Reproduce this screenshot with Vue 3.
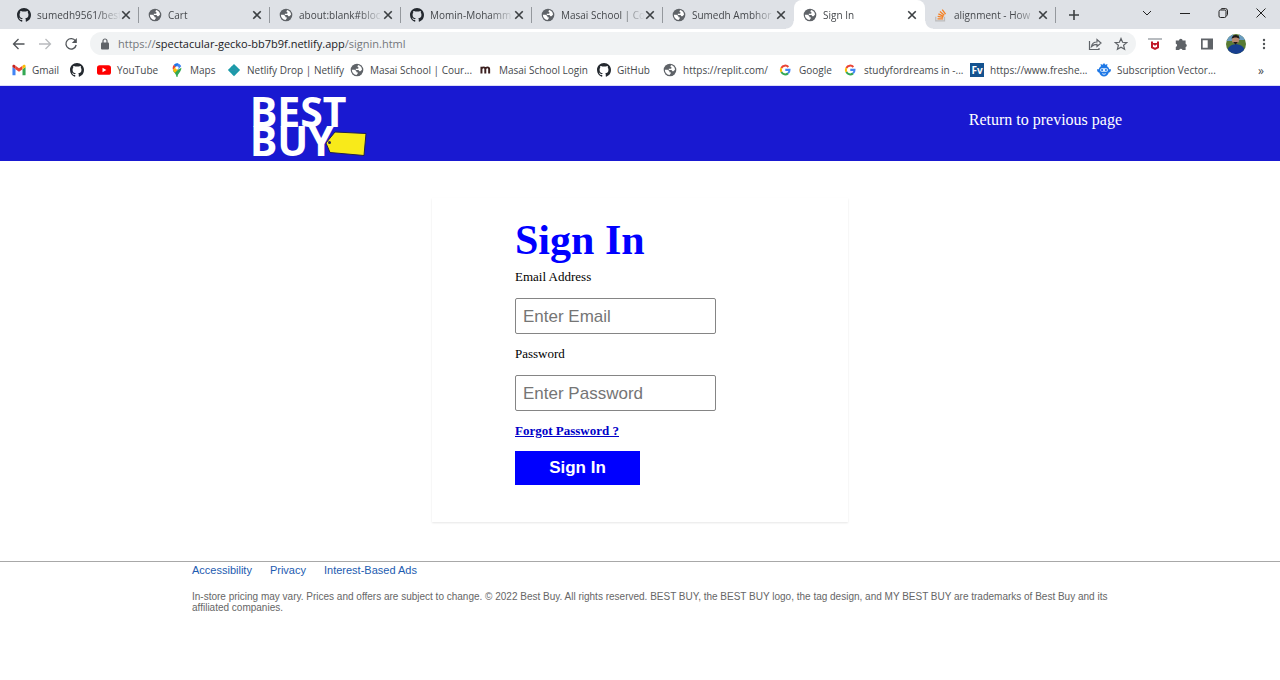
<script setup>
import { ref } from 'vue'

const tabs = [
  { icon: 'github', title: 'sumedh9561/best' },
  { icon: 'globe', title: 'Cart' },
  { icon: 'globe', title: 'about:blank#bloc' },
  { icon: 'github', title: 'Momin-Mohamm' },
  { icon: 'globe', title: 'Masai School | Co' },
  { icon: 'globe', title: 'Sumedh Ambhor' },
  { icon: 'globe', title: 'Sign In', active: true },
  { icon: 'stack', title: 'alignment - How' }
]

const bookmarks = [
  { icon: 'gmail', title: 'Gmail' },
  { icon: 'github', title: '' },
  { icon: 'youtube', title: 'YouTube' },
  { icon: 'maps', title: 'Maps' },
  { icon: 'netlify', title: 'Netlify Drop | Netlify' },
  { icon: 'globe', title: 'Masai School | Cour...' },
  { icon: 'masai', title: 'Masai School Login' },
  { icon: 'github', title: 'GitHub' },
  { icon: 'globe', title: 'https://replit.com/' },
  { icon: 'google', title: 'Google' },
  { icon: 'google', title: 'studyfordreams in -...' },
  { icon: 'fv', title: 'https://www.freshe...' },
  { icon: 'robot', title: 'Subscription Vector...' }
]

const email = ref('')
const password = ref('')
</script>

<template>
  <svg class="defs" aria-hidden="true">
    <symbol id="github" viewBox="0 0 16 16">
      <path fill="#24292f" d="M8 0C3.58 0 0 3.58 0 8c0 3.54 2.29 6.53 5.47 7.59.4.07.55-.17.55-.38 0-.19-.01-.82-.01-1.49-2.01.37-2.53-.49-2.69-.94-.09-.23-.48-.94-.82-1.13-.28-.15-.68-.52-.01-.53.63-.01 1.08.58 1.23.82.72 1.21 1.87.87 2.33.66.07-.52.28-.87.51-1.07-1.78-.2-3.64-.89-3.64-3.95 0-.87.31-1.59.82-2.15-.08-.2-.36-1.02.08-2.12 0 0 .67-.21 2.2.82a7.6 7.6 0 0 1 4 0c1.53-1.04 2.2-.82 2.2-.82.44 1.1.16 1.92.08 2.12.51.56.82 1.27.82 2.15 0 3.07-1.87 3.75-3.65 3.95.29.25.54.73.54 1.48 0 1.07-.01 1.93-.01 2.2 0 .21.15.46.55.38A8 8 0 0 0 16 8c0-4.42-3.58-8-8-8z" />
    </symbol>
    <symbol id="globe" viewBox="0 0 16 16">
      <circle cx="8" cy="8" r="7.2" fill="#5f6368" />
      <path fill="#fff" d="M9.3 2.2 8.4 4l1.4 1.2-.5 1.3H6.6v1.4h3.1l1 1.6h1.2l1.8-1.8a5.8 5.8 0 0 0-4.4-5.5zM2.2 7.7h3.1l2 1.5v1.5h1.5v1.4l-1.4 1.6A5.8 5.8 0 0 1 2.2 7.7z" />
    </symbol>
    <symbol id="stack" viewBox="0 0 16 16">
      <path fill="none" stroke="#bcbbbb" stroke-width="1.4" d="M2 10v4.6h10V10" />
      <path fill="none" stroke="#f48024" stroke-width="1.5" d="M4 12.4h6.4M4.2 9.6l6.3 1.2M5 6.8l6 2.7M6.8 4.1l5 4.1M9.4 1.8l3.8 5.2" />
    </symbol>
    <symbol id="gmail" viewBox="0 0 16 16">
      <path fill="#4285f4" d="M1 14h3V7L.5 4.5V13c0 .6.2 1 .5 1z" />
      <path fill="#34a853" d="M12 14h3c.3 0 .5-.4.5-1V4.5L12 7z" />
      <path fill="#ea4335" d="M4 7V3l4 3 4-3v4l-4 3z" />
      <path fill="#c5221f" d="M.5 4.5v-1C.5 2 2 1.6 3 2.3L4 3v4z" />
      <path fill="#fbbc04" d="M15.5 4.5v-1C15.5 2 14 1.600 13 2.300L12 3v4z" />
    </symbol>
    <symbol id="youtube" viewBox="0 0 16 16">
      <rect y="2.5" width="16" height="11" rx="3" fill="#f00" />
      <path fill="#fff" d="M6.3 5.5v5L10.700 8z" />
    </symbol>
    <symbol id="maps" viewBox="0 0 16 16">
      <path fill="#34a853" d="M3.2 8.5C4.5 11 7 12 7.3 15.400c.2.800 1.200.8 1.400 0C9 12 13 10 13 5.500L8.500 8z" />
      <path fill="#4285f4" d="M8 .5c2.300 0 4.200 1.300 4.800 3.200L7.500 9.500 6.400 5z" />
      <path fill="#1a73e8" d="M4.200 2.200A5 5 0 0 1 9.600.7L6.500 5z" />
      <path fill="#ea4335" d="M4.200 2.200 6.600 4.300 3.500 8C2.700 6 2.900 3.800 4.200 2.200z" />
      <path fill="#fbbc04" d="m3.300 8 3-3.600 2.900 3.200L5.400 11.500z" />
      <circle cx="8" cy="5.500" r="1.900" fill="#fff" />
    </symbol>
    <symbol id="netlify" viewBox="0 0 16 16">
      <path fill="#1a9ba8" d="m8 1 7 7-7 7-7-7z" />
      <path fill="none" stroke="#3a8fb0" stroke-width=".6" d="m5 4 7 4-6 5M3 9l9-1" />
    </symbol>
    <symbol id="masai" viewBox="-1 -1 20 20">
      <path fill="none" stroke="#3b1f1f" stroke-width="2.800" d="M2.500 14V4.500M2.500 7.500C3.500 4.500 8 4.500 8 7.500V14M8 7.500C9 4.500 13.500 4.500 13.500 7.500V14" />
    </symbol>
    <symbol id="google" viewBox="-1 -2 20 20">
      <g fill="none" stroke-width="2.900">
        <path stroke="#ea4335" d="M2.400 5A6.200 6.200 0 0 1 12.400 3.700" />
        <path stroke="#fbbc05" d="M2.400 5a6.200 6.200 0 0 0 0 6" />
        <path stroke="#34a853" d="M2.400 11a6.200 6.200 0 0 0 9.500 1.800" />
        <path stroke="#4285f4" d="M11.900 12.800A6.200 6.200 0 0 0 14 7.800H8" />
      </g>
    </symbol>
    <symbol id="robot" viewBox="0 0 16 16">
      <path fill="#1e78e6" d="M8 0 9.500 2 12 1.200l-.6 2.600c1.400.9 2.200 2 2.500 3.200H16c0 2.200-.8 3.400-2.500 3.800C12.500 13.700 10.500 15.500 8 15.500s-4.500-1.800-5.500-4.700C.8 10.400 0 9.200 0 7h2.100c.3-1.200 1.100-2.300 2.500-3.200L4 1.200 6.500 2z" />
      <rect x="3.500" y="6" width="9" height="4" rx="2" fill="#e8f2ff" />
      <circle cx="5.800" cy="8" r="1.200" fill="#1e78e6" />
      <circle cx="10.200" cy="8" r="1.200" fill="#1e78e6" />
      <path fill="none" stroke="#fff" d="M6 12.200q2 1.400 4 0" />
    </symbol>
  </svg>

  <div class="browser">
    <div class="tabstrip">
      <div v-for="(tab, i) in tabs" :key="i" class="tab" :class="{ active: tab.active, plain: i === 5 }">
        <svg class="icon"><use :href="'#' + tab.icon" /></svg>
        <span class="tab-title">{{ tab.title }}</span>
        <button class="bare" aria-label="Close tab">
          <svg class="cross" viewBox="0 0 8 8"><path d="m1 1 6 6M7 1 1 7" /></svg>
        </button>
      </div>
      <button class="bare new-tab" aria-label="New tab">
        <svg viewBox="0 0 12 12"><path d="M6 1v10M1 6h10" /></svg>
      </button>
      <div class="window-buttons">
        <button class="bare" aria-label="Search tabs"><svg viewBox="0 0 10 10"><path d="m1 3 4 4 4-4" /></svg></button>
        <button class="bare" aria-label="Minimize"><svg viewBox="0 0 10 10"><path d="M0 5.500h10" /></svg></button>
        <button class="bare" aria-label="Restore"><svg viewBox="0 0 10 10"><rect x="1" y="2" width="7" height="7.500" rx="1.500" /><path d="M3 1.500Q3 .6 4 .6h3.500Q9.500.6 9.500 3v3.500q0 1-1 1.200" /></svg></button>
        <button class="bare" aria-label="Close window"><svg viewBox="0 0 10 10"><path d="m.5.5 9 9M9.500.5l-9 9" /></svg></button>
      </div>
    </div>

    <div class="toolbar">
      <button class="bare" aria-label="Back"><svg class="nav" viewBox="0 0 14 14"><path d="M12.500 7H2M6.500 2l-5 5 5 5" /></svg></button>
      <button class="bare" aria-label="Forward"><svg class="nav dim" viewBox="0 0 14 14"><path d="M1 7h11M7.500 2l5 5-5 5" /></svg></button>
      <button class="bare" aria-label="Reload"><svg class="nav" viewBox="0 0 14 14"><path d="M11.500 4A5.200 5.200 0 1 0 12.200 8" /><path class="solid" d="M12.800 1v5H7.800z" /></svg></button>
      <div class="address">
        <svg class="lock" viewBox="0 0 10 12"><rect x="1" y="4.500" width="8" height="7" rx="1" /><path d="M3 5V3a2 2 0 0 1 4 0v2" /></svg>
        <span class="url">https://<b>spectacular-gecko-bb7b9f.netlify.app</b>/signin.html</span>
        <button class="bare" aria-label="Share"><svg class="tool line" viewBox="0 0 14 14"><path d="M1.500 4v8.500h9.500V11M3.500 9.500C4 6.500 6 5 9 5V2.500L13 6 9 9.500V7.300C6.500 7.300 5 8 3.500 9.500z" /></svg></button>
        <button class="bare" aria-label="Bookmark"><svg class="tool line" viewBox="0 0 14 14"><path d="m7 1.500 1.600 3.800 4.100.3-3.100 2.700 1 4L7 10.200l-3.600 2.100 1-4-3.100-2.700 4.100-.3z" /></svg></button>
      </div>
      <div class="extensions">
        <button class="bare" aria-label="Security"><svg class="tool" viewBox="0 0 14 14"><path fill="#b8bcc0" d="M0 1h14v2H0z" /><path fill="none" stroke="#c01828" stroke-width="2" d="M4 4.500v6L7 12l3-1.500v-6M4 5.500l3 2 3-2" /></svg></button>
        <button class="bare" aria-label="Extensions"><svg class="tool" viewBox="0 0 14 14"><path fill="#5f6368" d="M5 3.500a1.800 1.800 0 0 1 3.600 0h3v3.200a1.800 1.800 0 0 1 0 3.400v3H8.500a1.700 1.700 0 0 0-3.300 0H1.800V10a1.700 1.700 0 0 0 0-3.300V3.500z" /></svg></button>
        <button class="bare" aria-label="Side panel"><svg class="tool" viewBox="0 0 14 14"><path fill="#5f6368" fill-rule="evenodd" d="M1 1.500h12v11H1zM2.700 3.200v7.600h5V3.200z" /></svg></button>
        <button class="bare" aria-label="Profile">
          <svg class="avatar" viewBox="0 0 20 20">
            <clipPath id="face"><circle cx="10" cy="10" r="10" /></clipPath>
            <g clip-path="url(#face)">
              <path fill="#587b35" d="M0 0h20v20H0z" />
              <path fill="#6a9cc0" d="M0 0h7v7H0zM13 0h7v6h-7z" />
              <path fill="#173f90" d="M1 20c0-8 4-9 9-10 6 1 9 3 9 10z" />
              <circle cx="9.500" cy="6" r="3.600" fill="#b98b70" />
              <path fill="#1c1718" d="M5.600 5c0-5.500 8-5.500 8 0-2-2-6-2-8 0zM7 8h5l-2.500 2.500z" />
            </g>
          </svg>
        </button>
        <button class="bare" aria-label="Menu"><svg class="dots" viewBox="0 0 4 12"><circle cx="2" cy="2" r="1.200" /><circle cx="2" cy="6" r="1.200" /><circle cx="2" cy="10" r="1.200" /></svg></button>
      </div>
    </div>

    <nav class="bookmarks" aria-label="Bookmarks">
      <a v-for="(mark, i) in bookmarks" :key="i" href="#" :aria-label="mark.title || 'GitHub home'">
        <span v-if="mark.icon === 'fv'" class="fv">Fv</span>
        <svg v-else class="icon"><use :href="'#' + mark.icon" /></svg>
        <span v-if="mark.title">{{ mark.title }}</span>
      </a>
      <button class="bare more" aria-label="More bookmarks">»</button>
    </nav>
  </div>

  <header class="masthead">
    <a href="#" class="brand" aria-label="Best Buy">
      <svg viewBox="0 0 116 64">
        <g class="wordmark">
          <text x="-3" y="33">BEST</text>
          <text x="-3" y="62">BUY</text>
        </g>
        <path fill="#f8ea1a" stroke="#23204a" stroke-width="1" d="m82 38 31 1.500-2 22L77 58.500 73 49z" />
        <circle cx="76.500" cy="48.500" r="1.500" fill="#23204a" />
      </svg>
    </a>
    <a href="#" class="return">Return to previous page</a>
  </header>

  <main>
    <form class="card" @submit.prevent>
      <h1>Sign In</h1>
      <label for="email">Email Address</label>
      <input id="email" v-model="email" type="email" placeholder="Enter Email">
      <label for="password">Password</label>
      <input id="password" v-model="password" type="password" placeholder="Enter Password">
      <a href="#" class="forgot">Forgot Password ?</a>
      <button type="submit" class="submit">Sign In</button>
    </form>
  </main>

  <footer>
    <nav class="legal" aria-label="Legal">
      <a href="#">Accessibility</a>
      <a href="#">Privacy</a>
      <a href="#">Interest-Based Ads</a>
    </nav>
    <p>In-store pricing may vary. Prices and offers are subject to change. © 2022 Best Buy. All rights reserved. BEST BUY, the BEST BUY logo, the tag design, and MY BEST BUY are trademarks of Best Buy and its affiliated companies.</p>
  </footer>
</template>

<style>
body {
  background: #fff;
  font-family: "Liberation Serif", "Times New Roman", serif;
}
</style>

<style scoped>
* {
  box-sizing: border-box;
}

.defs {
  position: absolute;
  width: 0;
  height: 0;
}

.bare {
  display: grid;
  place-items: center;
  flex: none;
  padding: 0;
  border: 0;
  background: none;
  color: #45484c;
}

svg {
  display: block;
}

.icon {
  flex: none;
  width: 14px;
  height: 14px;
}

.browser {
  font-family: "Open Sans", "Noto Sans", sans-serif;
  font-size: 10px;
  color: #45484c;
}

.tabstrip {
  display: flex;
  height: 29px;
  padding-left: 8px;
  background: #dee1e6;
}

.tab {
  display: flex;
  align-items: center;
  flex: 0 1 131px;
  min-width: 0;
  padding: 0 8px 0 9px;
  background: linear-gradient(#94989d, #94989d) right center / 1px 16px no-repeat;
}

.tab.plain {
  background: none;
}

.tab.active {
  position: relative;
  border-radius: 8px 8px 0 0;
  background: #fff;
}

.tab.active::before,
.tab.active::after {
  content: "";
  position: absolute;
  bottom: 0;
  width: 8px;
  height: 8px;
}

.tab.active::before {
  right: 100%;
  background: radial-gradient(circle at 0 0, transparent 7px, #fff 8px);
}

.tab.active::after {
  left: 100%;
  background: radial-gradient(circle at 100% 0, transparent 7px, #fff 8px);
}

.tab-title {
  flex: 1;
  margin-left: 6px;
  overflow: hidden;
  white-space: nowrap;
  mask-image: linear-gradient(to right, #000 calc(100% - 24px), transparent);
}

.cross {
  width: 10px;
  height: 10px;
  fill: none;
  stroke: #3c4043;
  stroke-width: 1.3;
}

.new-tab {
  width: 36px;
}

.new-tab svg {
  width: 12px;
  height: 12px;
  stroke: #3c4043;
  stroke-width: 1.6;
}

.window-buttons {
  display: flex;
  margin-left: auto;
  padding-bottom: 4px;
}

.window-buttons .bare {
  width: 38px;
}

.window-buttons svg {
  width: 10px;
  height: 10px;
  fill: none;
  stroke: #222;
  stroke-width: 1;
}

.toolbar {
  display: flex;
  align-items: center;
  gap: 12px;
  height: 29px;
  padding: 0 10px 0 12px;
}

.nav {
  width: 14px;
  height: 14px;
  fill: none;
  stroke: #505458;
  stroke-width: 1.3;
}

.nav.dim {
  stroke: #b9bbbe;
}

.nav .solid {
  fill: #505458;
  stroke: none;
}

.address {
  display: flex;
  align-items: center;
  gap: 12px;
  flex: 1;
  height: 23px;
  padding: 0 8px 0 10px;
  border-radius: 12px;
  background: #f1f3f4;
}

.lock {
  flex: none;
  width: 10px;
  height: 12px;
  fill: #5f6368;
}

.lock path {
  fill: none;
  stroke: #5f6368;
  stroke-width: 1.2;
}

.url {
  flex: 1;
  margin-left: -4px;
  font-size: 11px;
  color: #74777b;
  white-space: nowrap;
}

.url b {
  font-weight: 400;
  color: #202124;
}

.tool {
  width: 14px;
  height: 14px;
}

.tool.line {
  fill: none;
  stroke: #5f6368;
  stroke-width: 1.2;
}

.extensions {
  display: flex;
  align-items: center;
  gap: 12px;
}

.avatar {
  width: 20px;
  height: 20px;
}

.dots {
  width: 12px;
  height: 12px;
  fill: #505458;
}

.bookmarks {
  display: grid;
  grid-template-columns: 58px 27px 73px 57px 123px 129px 118px 66px 116px 65px 126px 127px 126px 1fr;
  align-items: center;
  height: 28px;
  padding: 0 12px 3px;
  border-bottom: 1px solid #dcdcf8;
}

.bookmarks a {
  display: flex;
  align-items: center;
  gap: 6px;
  color: inherit;
  text-decoration: none;
  white-space: nowrap;
}

.fv {
  width: 14px;
  background: #14528f;
  color: #fff;
  font-weight: 700;
  line-height: 14px;
  text-align: center;
}

.more {
  justify-self: end;
  padding-right: 4px;
  font-family: inherit;
  font-size: 12px;
}

.masthead {
  display: flex;
  align-items: flex-start;
  justify-content: space-between;
  height: 75px;
  padding: 8px 158px 0 253px;
  background: #1919d1;
}

.brand svg {
  width: 116px;
  height: 64px;
}

.wordmark {
  fill: #fff;
  font-family: "Noto Sans", "Open Sans", sans-serif;
  font-size: 41px;
  font-weight: 700;
}

.return {
  padding-top: 17px;
  color: #fff;
  font-size: 16px;
  line-height: 18px;
  text-decoration: none;
}

.card {
  display: flex;
  flex-direction: column;
  align-items: flex-start;
  width: 416px;
  max-width: 100%;
  margin: 37px auto 39px;
  padding: 18px 83px 37px;
  box-shadow: 0 1px 2px #0000001a;
}

h1 {
  margin: 0 0 5px;
  color: #00f;
  font-size: 42px;
  line-height: 48px;
}

label,
.forgot {
  font-size: 13px;
  line-height: 16px;
}

input {
  width: 201px;
  height: 36px;
  margin: 13px 0 12px;
  padding: 2px 7px 0;
  border: 1px solid #858585;
  border-radius: 2px;
  font-family: "Liberation Sans", Arial, sans-serif;
  font-size: 17px;
}

input::placeholder {
  color: #757575;
}

.forgot {
  color: #0000c8;
  font-weight: 700;
}

.submit {
  width: 125px;
  height: 34px;
  margin-top: 12px;
  border: 0;
  background: #00f;
  color: #fff;
  font-family: "Liberation Sans", Arial, sans-serif;
  font-size: 17px;
  font-weight: 700;
}

footer {
  padding: 0 13% 0 15%;
  border-top: 1px solid #a8a8a8;
  font-family: "Liberation Sans", Arial, sans-serif;
}

.legal {
  display: flex;
  gap: 18px;
  padding-top: 2px;
  font-size: 11px;
  line-height: 12px;
}

.legal a {
  color: #1d5bb0;
  text-decoration: none;
}

p {
  margin: 15px 0 0;
  color: #666;
  font-size: 10px;
  line-height: 11px;
}
</style>
